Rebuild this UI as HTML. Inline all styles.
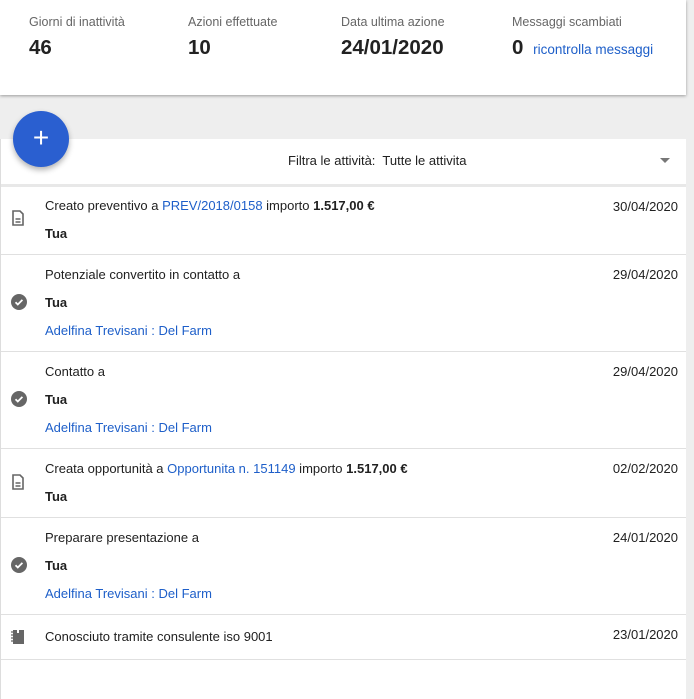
<!DOCTYPE html>
<html><head><style>
body{margin:0;width:694px;height:687px;background:#eeeeee;font-family:"Liberation Sans",sans-serif;color:#212121;overflow:hidden;position:relative}
.top{position:absolute;left:0;top:0;width:686px;height:95px;background:#fff;box-shadow:0 1px 3px rgba(0,0,0,.35)}
.stat{position:absolute;top:15px}
.stat .l{font-size:12.5px;color:#666}
.stat .v{font-size:20.5px;font-weight:bold;margin-top:7px;color:#222}
.stat a{color:#1e5fc9;font-size:13.5px;font-weight:normal;margin-left:4px;text-decoration:none}
.list{position:absolute;left:0;top:139px;width:685px;height:560px;background:#fff;border-left:1px solid #ddd}
.filter{height:45px;border-bottom:3px solid #e8e8e8;font-size:13px;position:relative}
.filter span{position:absolute;left:287px;top:14px}
.tri{position:absolute;left:659px;top:19px;width:0;height:0;border-left:5px solid transparent;border-right:5px solid transparent;border-top:5px solid #777}
.row{position:relative;border-bottom:1px solid #e0e0e0;font-size:13px}
.row .t{position:absolute;left:44px}
.row .d{position:absolute;right:8px;top:12px}
.row a{color:#1e5fc9;text-decoration:none}
.ic{position:absolute;left:10px}
.fab{position:absolute;left:13px;top:111px;width:56px;height:56px;border-radius:50%;background:#2a5fd0;box-shadow:0 3px 6px rgba(0,0,0,.3);color:#fff;font-size:28px;text-align:center;line-height:54px}
</style></head><body>
<div class="top">
<div class="stat" style="left:29px"><div class="l">Giorni di inattività</div><div class="v">46</div></div>
<div class="stat" style="left:188px"><div class="l">Azioni effettuate</div><div class="v">10</div></div>
<div class="stat" style="left:341px"><div class="l">Data ultima azione</div><div class="v">24/01/2020</div></div>
<div class="stat" style="left:512px"><div class="l">Messaggi scambiati</div><div class="v">0 <a>ricontrolla messaggi</a></div></div>
</div>
<div class="list">
<div class="filter"><span>Filtra le attività:&nbsp; Tutte le attivita</span><div class="tri"></div></div>
<div class="row" style="height:67px">
<svg class="ic" style="top:23px" width="14" height="16" viewBox="0 0 14 16"><path d="M2 1h7l3 3v11H2z" fill="none" stroke="#666" stroke-width="1.6"/><path d="M4.5 9h5M4.5 12h5" stroke="#666" stroke-width="1.4"/></svg>
<div class="t" style="top:11px">Creato preventivo a <a>PREV/2018/0158</a> importo <b>1.517,00 €</b></div>
<div class="t" style="top:39px"><b>Tua</b></div><div class="d">30/04/2020</div></div>
<div class="row" style="height:96px">
<svg class="ic" style="top:39px" width="16" height="16" viewBox="0 0 16 16"><circle cx="8" cy="8" r="8" fill="#666"/><path d="M4.5 8.2l2.3 2.3 4.6-4.6" fill="none" stroke="#fff" stroke-width="1.8"/></svg>
<div class="t" style="top:12px">Potenziale convertito in contatto a</div>
<div class="t" style="top:40px"><b>Tua</b></div><div class="t" style="top:68px"><a>Adelfina Trevisani : Del Farm</a></div><div class="d">29/04/2020</div></div>
<div class="row" style="height:96px">
<svg class="ic" style="top:39px" width="16" height="16" viewBox="0 0 16 16"><circle cx="8" cy="8" r="8" fill="#666"/><path d="M4.5 8.2l2.3 2.3 4.6-4.6" fill="none" stroke="#fff" stroke-width="1.8"/></svg>
<div class="t" style="top:12px">Contatto a</div>
<div class="t" style="top:40px"><b>Tua</b></div><div class="t" style="top:68px"><a>Adelfina Trevisani : Del Farm</a></div><div class="d">29/04/2020</div></div>
<div class="row" style="height:68px">
<svg class="ic" style="top:25px" width="14" height="16" viewBox="0 0 14 16"><path d="M2 1h7l3 3v11H2z" fill="none" stroke="#666" stroke-width="1.6"/><path d="M4.5 9h5M4.5 12h5" stroke="#666" stroke-width="1.4"/></svg>
<div class="t" style="top:12px">Creata opportunità a <a>Opportunita n. 151149</a> importo <b>1.517,00 €</b></div>
<div class="t" style="top:40px"><b>Tua</b></div><div class="d">02/02/2020</div></div>
<div class="row" style="height:96px">
<svg class="ic" style="top:39px" width="16" height="16" viewBox="0 0 16 16"><circle cx="8" cy="8" r="8" fill="#666"/><path d="M4.5 8.2l2.3 2.3 4.6-4.6" fill="none" stroke="#fff" stroke-width="1.8"/></svg>
<div class="t" style="top:12px">Preparare presentazione a</div>
<div class="t" style="top:40px"><b>Tua</b></div><div class="t" style="top:68px"><a>Adelfina Trevisani : Del Farm</a></div><div class="d">24/01/2020</div></div>
<div class="row" style="height:44px">
<svg class="ic" style="top:14px" width="14" height="16" viewBox="0 0 14 16"><rect x="2" y="1" width="11" height="14" fill="#666"/><path d="M0 3h3M0 6h3M0 9h3M0 12h3" stroke="#666" stroke-width="1.3"/><rect x="6" y="1" width="2" height="3" fill="#fff"/></svg>
<div class="t" style="top:14px">Conosciuto tramite consulente iso 9001</div><div class="d">23/01/2020</div></div>
</div>
<div class="fab">+</div>
</body></html>
